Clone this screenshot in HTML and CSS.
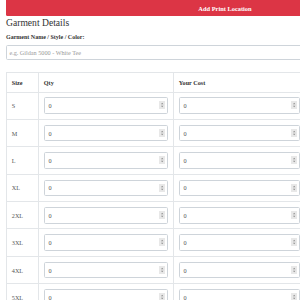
FILE: index.html
```html
<!DOCTYPE html>
<html lang="en">
<head>
    <meta charset="UTF-8">
    <meta name="viewport" content="width=device-width, initial-scale=1.0">
    <title>Garment Details</title>
    <link rel="stylesheet" href="styles.css">
</head>
<body>
    <div class="page">
        <button class="add-location">Add Print Location</button>

        <h2 class="section-title">Garment Details</h2>
        <label class="field-label" for="garment-name">Garment Name / Style / Color:</label>
        <input type="text" id="garment-name" class="text-field" placeholder="e.g. Gildan 5000 - White Tee">

        <table class="size-table">
            <thead>
                <tr>
                    <th class="col-size">Size</th>
                    <th class="col-qty">Qty</th>
                    <th class="col-cost">Your Cost</th>
                </tr>
            </thead>
            <tbody id="size-rows"></tbody>
        </table>
    </div>

    <script>
        const sizes = ["S", "M", "L", "XL", "2XL", "3XL", "4XL", "5XL"];

        function numberField() {
            return '<div class="num-wrap">' +
                '<input type="number" class="num-field" value="0">' +
                '<span class="spin"><svg viewBox="0 0 16 20" width="16" height="20">' +
                '<path d="M5 8 L8 4.5 L11 8 Z" fill="#8a8a8a"/>' +
                '<path d="M5 12 L8 15.5 L11 12 Z" fill="#8a8a8a"/>' +
                '</svg></span></div>';
        }

        let rows = document.getElementById("size-rows");
        for (let i = 0; i < sizes.length; i++) {
            let tr = document.createElement("tr");
            tr.innerHTML = "<td>" + sizes[i] + "</td><td>" + numberField() + "</td><td>" + numberField() + "</td>";
            rows.appendChild(tr);
        }
    </script>
</body>
</html>
```

FILE: styles.css
```css
        html, body {
            margin: 0;
            padding: 0;
            overflow: hidden;
        }

        body {
            zoom: 0.4;
            font-family: "Liberation Serif", "Times New Roman", serif;
            color: #333;
            background: #fff;
        }

        .page {
            width: 1095px;
            padding: 0 15px;
        }

        .add-location {
            display: block;
            width: 100%;
            height: 40px;
            border: none;
            border-radius: 0 0 4px 4px;
            background-color: #dc3545;
            color: white;
            font-family: inherit;
            font-size: 16px;
            font-weight: bold;
        }

        .section-title {
            margin: 2px 0 0;
            font-size: 24px;
            line-height: 28px;
            font-weight: normal;
        }

        .field-label {
            display: block;
            margin-top: 16px;
            font-size: 15px;
            line-height: 17px;
            font-weight: bold;
        }

        .text-field {
            display: block;
            box-sizing: border-box;
            width: 100%;
            height: 38px;
            margin-top: 9px;
            padding: 0 6px;
            border: 1px solid #ced4da;
            border-radius: 4px;
            font-family: inherit;
            font-size: 15.5px;
            color: #495057;
        }

        .text-field::placeholder {
            color: #999;
        }

        .size-table {
            margin-top: 30px;
            border-collapse: collapse;
        }

        .size-table th, .size-table td {
            box-sizing: border-box;
            border: 1px solid #e3e6e9;
            padding: 12px;
            text-align: left;
            font-size: 15.5px;
        }

        .size-table th {
            height: 49px;
            padding-top: 0;
            padding-bottom: 0;
            color: #333;
        }

        .size-table td {
            padding-top: 12.25px;
            padding-bottom: 12.25px;
            color: #555;
        }

        .col-size { width: 80px; }
        .col-qty { width: 337.5px; }
        .col-cost { width: 330px; }

        .num-wrap {
            position: relative;
        }

        .num-field {
            display: block;
            box-sizing: border-box;
            width: 100%;
            height: 41.5px;
            padding: 0 30px 0 9px;
            border: 1px solid #ced4da;
            border-radius: 4px;
            font-family: inherit;
            font-size: 15.5px;
            color: #555;
        }

        .num-field::-webkit-inner-spin-button,
        .num-field::-webkit-outer-spin-button {
            -webkit-appearance: none;
            margin: 0;
        }

        .spin {
            position: absolute;
            right: 8px;
            top: 10px;
            width: 16px;
            height: 20px;
            background: #e8e8e8;
        }

        .spin svg {
            display: block;
        }
```
